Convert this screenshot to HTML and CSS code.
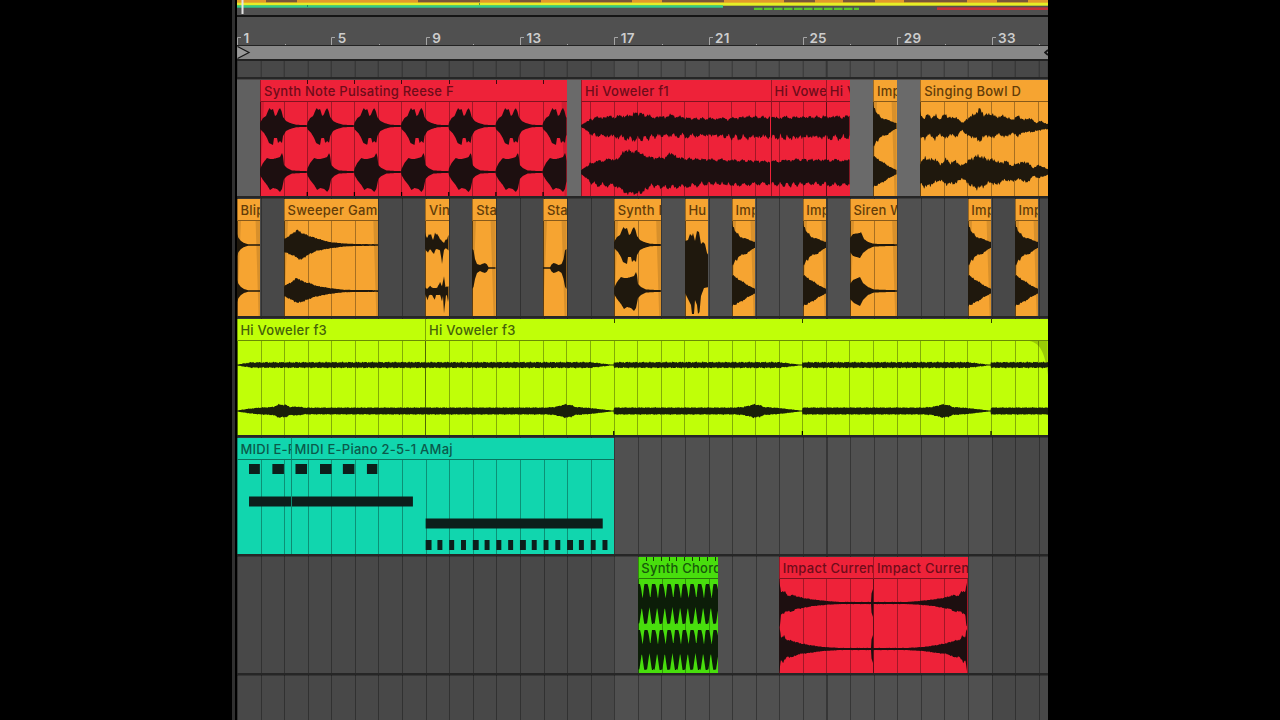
FILE: index.html
```html
<!DOCTYPE html>
<html lang="en">
<head>
<meta charset="UTF-8">
<meta name="viewport" content="width=device-width, initial-scale=1.0">
<title>Arrangement</title>
<link rel="stylesheet" href="styles.css">
</head>
<body>

<div class="arrangement">
  <svg class="overview" id="overview" width="811" height="15" viewBox="0 0 811 15"></svg>

  <div class="ruler" id="ruler"></div>

  <div class="loop-bar">
    <svg width="14" height="13" viewBox="0 0 14 13"><path d="M.5 .5 L12 6.5 L.5 12.5" fill="#999" stroke="#161616" stroke-width="1.2"/></svg>
    <svg width="4" height="13" viewBox="0 0 4 13"><path d="M4 4 L1 6.5 L4 9" fill="none" stroke="#161616" stroke-width="1.8"/></svg>
  </div>

  <div class="scrub lanes"></div>

  <div class="track lanes selected" id="track1"></div>
  <div class="track lanes" id="track2"></div>
  <div class="track lanes" id="track3"></div>
  <div class="track lanes" id="track4"></div>
  <div class="track lanes" id="track5"></div>
  <div class="track lanes"></div>
</div>

<script src="script.js"></script>
</body>
</html>
```

FILE: styles.css
```css
body, html {
  height: 100%;
  margin: 0;
  padding: 0;
  overflow: hidden;
  background: #000;
  font-family: Inter, "Liberation Sans", sans-serif;
}
.arrangement {
  --bar: 23.58px;
  box-sizing: border-box;
  width: 816px;
  height: 720px;
  margin-left: 232px;
  border-left: 3px solid #303030;
  padding-left: 2px;
  overflow: hidden;
  display: flex;
  flex-direction: column;
}
.overview {
  display: block;
  flex: none;
  background: #505050;
}

/* ruler */
.ruler {
  flex: none;
  box-sizing: border-box;
  height: 31px;
  border-top: 2px solid #151515;
  border-bottom: 1px solid #222;
  background: #505050;
  display: flex;
}
.mark {
  flex: none;
  width: calc(var(--bar) * 4);
  box-sizing: border-box;
  padding-top: 20px;
  display: flex;
  align-items: flex-start;
}
.mark svg {
  flex: none;
}
.mark span {
  margin: -7px 0 0 1.5px;
  font-size: 13.5px;
  line-height: 16px;
  font-weight: 600;
  letter-spacing: 0.3px;
  color: #cdcdcd;
  width: 41px;
}
.loop-bar {
  flex: none;
  height: 13px;
  border-bottom: 2px solid #222;
  background: #888;
  display: flex;
  justify-content: space-between;
}

/* bar lines, with every 16 bars shaded in turn */
.lanes {
  background:
    repeating-linear-gradient(to right, rgba(0, 0, 0, 0.32) 0 1px, transparent 1px var(--bar)),
    repeating-linear-gradient(to right, #484848 0 calc(var(--bar) * 16), #505050 calc(var(--bar) * 16) calc(var(--bar) * 32));
  background-position-x: -0.3px;
}
.scrub {
  flex: none;
  height: 16px;
}
.track {
  flex: none;
  box-sizing: border-box;
  height: 119.25px;
  margin-left: -0.3px;
  padding-top: 1px;
  border-top: 2px solid #262626;
  box-shadow: inset 0 1px rgba(0, 0, 0, 0.25);
  background-position-x: 0;
  display: flex;
}
.selected {
  background: repeating-linear-gradient(to right, #606060 0 calc(var(--bar) * 14), #6a6a6a calc(var(--bar) * 14) calc(var(--bar) * 40));
}

/* clips */
.clip {
  flex: none;
  box-sizing: border-box;
  height: 116.25px;
  margin-left: calc(var(--gap) * var(--bar));
  width: calc(var(--length) * var(--bar));
  overflow: hidden;
  background: var(--color);
}
.clip-name {
  box-sizing: border-box;
  height: 22px;
  padding-left: 2.7px;
  border-left: 1px solid rgba(0, 0, 0, 0.35);
  border-bottom: 1px solid rgba(0, 0, 0, 0.45);
  background: repeating-linear-gradient(to right, transparent 0 calc(var(--loop, 9999px) - 1px), rgba(0, 0, 0, 0.75) calc(var(--loop, 9999px) - 1px) var(--loop, 9999px)) 0 0 / 100% 4px no-repeat;
  font-size: 13px;
  line-height: 22px;
  font-weight: 500;
  letter-spacing: 0.26px;
  white-space: nowrap;
  color: var(--ink);
}
.clip-body {
  height: 95px;
  background: repeating-linear-gradient(to right, rgba(0, 0, 0, 0.32) 0 1px, transparent 1px var(--bar));
  background-position-x: calc(var(--start) * var(--bar) * -1 - 1px);
  background-size: calc(var(--bar) * 40) 100%;
  border-left: 1px solid rgba(0, 0, 0, 0.4);
}
.clip-body svg {
  display: block;
  margin-left: -1px;
}
.red { --color: #ee2239; --ink: #6f0c19; --wave: #1d0f10; }
.orange { --color: #f6a431; --ink: #633c08; --wave: #1f180d; }
.lime { --color: #c0ff08; --ink: #44620a; --wave: #19200a; }
.teal { --color: #11d6ae; --ink: #0b5a4b; --wave: #0c1f1b; }
.green { --color: #48de0d; --ink: #17590a; --wave: #0c1d08; }
```

FILE: script.js
```js
const BAR = 23.58;
const NAME_H = 22;

// Envelopes: [x, height] pairs in px, measured from the channel's centre line.
// Each channel is { y, up, down, jag, loop }.
const impact = [
  { y: 46, up: [[0,20],[2,18],[3,14],[6,11],[8,8],[12,7],[15,6],[18,5],[22,3],[24,3]], down: [[0,20],[2,19],[3,16],[5,15],[7,11],[10,10],[14,9],[18,6],[22,3],[24,3]], jag: .1 },
  { y: 92, up: [[0,17],[3,14],[6,12],[8,11],[11,9],[14,7],[19,4],[24,2]], down: [[0,15],[4,13],[8,11],[12,9],[16,6],[20,4],[24,2]], jag: .1 }
];
const pulse = [
  { y: 46, up: [[0,3],[3,8],[6,10],[8,15],[9.5,18],[11,16],[13,17],[15,10],[16.5,11],[18.5,16],[20,18],[21.5,15],[23,9],[26,5],[30,3],[36,1.3],[47.16,.8]],
    down: [[0,3],[4,7],[7,12],[9,17],[13,19],[14,12],[17,12],[18,17],[20,15],[22,17],[23,10],[26,5],[30,3],[36,1.3],[47.16,.8]] },
  { y: 92, up: [[0,3],[3,9],[7,14],[10,13],[13,13],[17,14],[20,15],[22,19],[23,16],[24,7],[27,4],[32,1.5],[47.16,.8]],
    down: [[0,3],[3,8],[7,13],[10,18],[13,16],[17,17],[20,20],[22,17],[24,7],[27,4],[32,1.5],[47.16,.8]] }
];
const voweler = [
  { y: 46, up: [[0,1],[5,4],[15,7],[35,8],[50,9],[55,12],[66,9],[75,7],[90,9],[110,6],[150,6],[167,8],[189,7],[270,8]],
    down: [[0,1],[5,4],[12,8],[35,11],[50,13],[60,12],[75,10],[120,9],[160,11],[270,11]], jag: .2, scallop: 1 },
  { y: 92, up: [[0,2],[8,7],[20,10],[38,12],[44,21],[48,19],[57,19],[65,14],[80,12],[90,17],[100,12],[130,11],[190,9],[215,11],[270,10]],
    down: [[0,2],[8,8],[15,12],[35,14],[45,21],[60,20],[70,13],[85,16],[100,14],[120,12],[270,12]], jag: .12, scallop: 1 }
];
const bowl = [
  { y: 46, up: [[0,13],[4,7],[8,12],[12,8],[16,11],[20,6],[25,13],[28,8],[33,9],[38,7],[43,3],[48,8],[55,12],[60,17],[64,11],[72,12],[76,9],[84,10],[92,6],[98,10],[104,6],[110,8],[116,3],[121,5],[127,2]],
    down: [[0,11],[5,13],[8,8],[15,13],[20,8],[26,13],[30,8],[36,11],[42,4],[48,10],[53,11],[60,15],[66,9],[72,12],[78,8],[86,11],[92,7],[98,10],[104,6],[112,6],[120,4],[127,3]], jag: .2 },
  { y: 92, up: [[0,9],[5,14],[12,12],[16,13],[20,7],[26,13],[30,9],[36,11],[41,6],[48,11],[54,15],[60,16],[66,13],[74,12],[80,9],[86,11],[92,6],[98,9],[107,10],[113,4],[119,7],[127,3]],
    down: [[0,11],[5,15],[12,12],[20,8],[26,12],[36,11],[42,6],[50,13],[56,16],[62,15],[70,10],[76,13],[84,8],[92,9],[100,7],[107,11],[113,4],[119,6],[127,3]], jag: .2 }
];
const blip = [46, 92].map(y => ({ y, up: [[0,11],[1.5,7],[4,4],[7,2],[11,.8],[24,.8]] }));
const sweeper = [
  { y: 46, up: [[0,6],[5,9],[9,12],[13,15],[18,12],[25,9],[35,6],[45,3],[60,1.5],[75,.9],[95,.8]], down: [[0,7],[8,10],[12,12],[17,15],[22,11],[32,6],[45,3.5],[60,1.5],[75,.9],[95,.8]], jag: .1 },
  { y: 92, up: [[0,5],[6,8],[13,13],[20,9],[25,8],[33,5],[45,3],[60,1.2],[95,.8]], down: [[0,5],[6,8],[14,12],[20,10],[30,6],[45,3],[60,1.2],[95,.8]], jag: .1 }
];
const vinyl = [
  { y: 46, up: [[0,12],[2,7],[4,11],[6,10],[8,5],[10,12],[12,11],[15,6],[19,2],[21,6],[22,5],[24,12]], down: [[0,4],[3,8],[5,4],[9,9],[11,4],[15,5],[17,19],[19,5],[21,3],[24,6]], jag: .1 },
  { y: 92, up: [[0,4],[2,2],[5,5],[8,3],[12,3],[15,9],[17,5],[19,14],[20.5,4],[24,5]], down: [[0,3],[2.5,9],[4,4],[7,4],[9.5,9],[11,4],[15,4],[17,10],[18,5],[19,22],[21,4],[22,5],[23,11],[24,4]], jag: .1 }
];
const stab = [{ y: 69, up: [[0,19],[1.5,18],[3,9],[5,4],[8,3],[10,4],[13,5],[15,3.5],[16.5,.8],[24,.8]], down: [[0,21],[1.5,19],[3,11],[5,5],[8,3],[10,4],[13,5],[15,3.5],[16.5,.8],[24,.8]] }];
const hum = [{ y: 69, up: [[0,27],[3,28],[5,34],[7,32],[8,35],[10,27],[12,37],[14,36],[16,24],[18,26],[20,24],[22,15],[24,12]], down: [[0,25],[3,31],[6,37],[7,46],[9,46],[10,32],[12,37],[13,46],[14.5,44],[16,28],[19,20],[24,19]] }];
const siren = [
  { y: 46, up: [[0,7],[3,11],[10,12],[11,13],[14,6],[18,3],[24,1.2],[47,.8]], down: [[0,7],[3,11],[10,13],[13,8],[18,4],[24,1.5],[47,.8]] },
  { y: 92, up: [[0,7],[3,11],[10,14],[13,8],[18,4],[24,1.5],[47,.8]], down: [[0,8],[4,12],[10,15],[13,9],[18,4],[24,1.5],[47,.8]] }
];
const drone = [
  { y: 46, up: [[0,.5],[14,2.6],[189,2.8]], jag: .3 },
  { y: 92, up: [[0,.5],[10,2],[22,3.3],[36,4],[42,6.5],[49,6],[53,4],[60,4.4],[68,3.3],[189,3.4]], jag: .15 }
];
const droneLoop = [
  { y: 46, up: [[0,2.7],[165,2.8],[186,.5],[188.6,.5]], jag: .3, loop: 188.64 },
  { y: 92, up: [[0,3.4],[120,3.4],[130,4],[140,6.5],[146,6],[150,4],[165,3],[186,.6],[188.6,.5]], jag: .15, loop: 188.64 }
];
const chord = [46, 92].map(y => ({ y, up: [[0,19],[2,19],[3.2,14],[4.6,4],[5.5,12],[6.3,19],[7.67,19]], down: [[0,20],[1.3,21],[3.8,4],[5.2,14],[6.2,21],[7.67,21]], loop: 7.67 }));
const currents = [
  { y: 46, up: [[0,20],[1.2,18],[2,11],[4,12],[6,11],[9,7],[13,8],[17,7],[24,5],[34,3.5],[50,1.8],[60,1.1],[94.4,1.1]], down: [[0,25],[1.2,20],[2,12],[4,11],[7,8],[12,9],[17,6],[24,5],[34,3],[50,1.6],[60,1.1],[94.4,1.1]], jag: .12 },
  { y: 92, up: [[0,24],[1.2,18],[2,11],[5,13],[8,9],[14,8],[20,6],[30,4],[44,2],[60,1.1],[94.4,1.1]], down: [[0,23],[1.2,17],[2,11],[4,13],[8,8],[14,8],[20,5],[30,4],[44,2],[60,1.1],[94.4,1.1]], jag: .12 }
];

// MIDI notes: [start bar, length in bars, y]
const notes = [
  [.51, .46, 26], [1.5, .49, 26], [2.48, .49, 26], [3.52, .49, 26], [4.49, .49, 26], [5.51, .44, 26],
  [.51, 6.95, 58.5], [8, 7.51, 80.5]
];
for (let i = 0; i < 16; i++) notes.push([8 + i / 2, i % 4 === 0 ? .25 : .21, 102]);

const tracks = {
  track1: [
    { name: 'Synth Note Pulsating Reese F', start: 1, end: 14, color: 'red', wave: pulse, repeat: 2, loop: 2, fade: 1 },
    { name: 'Hi Voweler f1', start: 14.62, end: 22.65, color: 'red', wave: voweler },
    { name: 'Hi Vowe', start: 22.65, end: 25, color: 'red', wave: voweler, offset: 189 },
    { name: 'Hi V', start: 25, end: 26, color: 'red', wave: voweler, offset: 244 },
    { name: 'Imp', start: 27, end: 28, color: 'orange', wave: impact, fade: 1 },
    { name: 'Singing Bowl D', start: 29, end: 35, color: 'orange', wave: bowl }
  ],
  track2: [
    { name: 'Blip', start: 0, end: 1, color: 'orange', wave: blip, fade: 1 },
    { name: 'Sweeper Gam', start: 2, end: 6, color: 'orange', wave: sweeper, fade: 1 },
    { name: 'Vin', start: 8, end: 9, color: 'orange', wave: vinyl },
    { name: 'Sta', start: 10, end: 11, color: 'orange', wave: stab, fade: 1 },
    { name: 'Sta', start: 13, end: 14, color: 'orange', wave: stab, reverse: 1, fade: 1 },
    { name: 'Synth N', start: 16, end: 18, color: 'orange', wave: pulse, fade: 1 },
    { name: 'Hu', start: 19, end: 20, color: 'orange', wave: hum },
    { name: 'Imp', start: 21, end: 22, color: 'orange', wave: impact, fade: 1 },
    { name: 'Imp', start: 24, end: 25, color: 'orange', wave: impact, fade: 1 },
    { name: 'Siren W', start: 26, end: 28, color: 'orange', wave: siren, fade: 1 },
    { name: 'Imp', start: 31, end: 32, color: 'orange', wave: impact, fade: 1 },
    { name: 'Imp', start: 33, end: 34, color: 'orange', wave: impact, fade: 1 }
  ],
  track3: [
    { name: 'Hi Voweler f3', start: 0, end: 8, color: 'lime', wave: drone },
    { name: 'Hi Voweler f3', start: 8, end: 35, color: 'lime', wave: droneLoop, loop: 8, curve: 1 }
  ],
  track4: [
    { name: 'MIDI E-P', start: 0, end: 2.29, color: 'teal', notes },
    { name: 'MIDI E-Piano 2-5-1 AMaj', start: 2.29, end: 16, color: 'teal', notes }
  ],
  track5: [
    { name: 'Synth Chord', start: 17, end: 20.43, color: 'green', wave: chord, loop: .325 },
    { name: 'Impact Curren', start: 23, end: 27, color: 'red', wave: currents, tail: 15 },
    { name: 'Impact Curren', start: 27, end: 31, color: 'red', wave: currents, reverse: 1 }
  ]
};

function level(points, x) {
  for (let i = 1; i < points.length; i++) {
    const [x0, y0] = points[i - 1];
    const [x1, y1] = points[i];
    if (x <= x1) return y0 + (y1 - y0) * (x - x0) / (x1 - x0);
  }
  return points[points.length - 1][1];
}

// smooth repeatable noise in -1..1
function noise(x, seed) {
  return (Math.sin(x * 1.9 + seed) + Math.sin(x * .83 + seed * 2.1) + Math.sin(x * 3.1 + seed)) / 3;
}

function wavePath(ch, width, clip) {
  const period = ch.loop || (clip.repeat ? clip.repeat * BAR : 0);
  const top = [];
  const bottom = [];
  for (let px = 0; px <= width; px += .5) {
    let x = (clip.reverse ? width - px : px) + (clip.offset || 0);
    if (period) x %= period;
    const jag = ch.jag || 0;
    let up = level(ch.up, x) * (1 + jag * noise(x, ch.y));
    let down = level(ch.down || ch.up, x) * (1 + jag * noise(x, ch.y + 3));
    // uneven rounded lobes along both edges
    if (ch.scallop && x > 8) {
      up += Math.abs(Math.sin(x * .36 + Math.sin(x * .11) + 1)) * 2.2;
      down += Math.abs(Math.sin(x * .4 + Math.sin(x * .09))) * (3.6 + Math.sin(x * .13)) - 2;
    }
    // click at the very end of the clip
    if (clip.tail && px > width - 2) up = down = clip.tail - (width - px) * 3;
    const y = ch.y - NAME_H;
    top.push(px + ' ' + (y - up).toFixed(1));
    bottom.unshift(px + ' ' + (y + down).toFixed(1));
  }
  return `<path fill="var(--wave)" d="M${top.join('L')}L${bottom.join('L')}Z"/>`;
}

function drawClip(clip, gap) {
  const width = (clip.end - clip.start) * BAR;
  let art = '';

  if (clip.fade) {
    art += `<path fill="rgba(0,0,0,.12)" d="M0 0H4L0 95ZM${width} 0H${width - 5}L${width - 2} 95H${width}Z"/>`;
  }
  if (clip.curve) {
    const edge = 811.3 - clip.start * BAR;
    art += `<path fill="rgba(0,0,0,.2)" d="M${edge - 18} 0C${edge - 7} 2 ${edge - 2} 14 ${edge} 34V0Z"/>`;
  }
  if (clip.wave) {
    art += clip.wave.map(ch => wavePath(ch, width, clip)).join('');
  }
  if (clip.notes) {
    art += clip.notes.map(([at, len, y]) =>
      `<rect fill="var(--wave)" x="${(at - clip.start) * BAR}" y="${y - NAME_H}" width="${len * BAR}" height="10"/>`).join('');
    art += '<rect width="1" height="95" fill="#0e8a72"/>';
  }
  // loop points on the bottom edge
  if (clip.loop > 1) {
    for (let x = clip.loop * BAR; x < width; x += clip.loop * BAR) {
      art += `<rect x="${x - .5}" y="90" width="1.2" height="4"/>`;
    }
  }

  const style = `--start:${clip.start};--gap:${gap};--length:${clip.end - clip.start}` +
    (clip.loop ? `;--loop:${clip.loop * BAR}px` : '');
  return `<div class="clip ${clip.color}" style="${style}">
    <div class="clip-name">${clip.name}</div>
    <div class="clip-body"><svg width="${width}" height="95">${art}</svg></div>
  </div>`;
}

for (const id in tracks) {
  let end = 0;
  document.getElementById(id).innerHTML = tracks[id].map(clip => {
    const html = drawClip(clip, clip.start - end);
    end = clip.end;
    return html;
  }).join('');
}

// ruler
let marks = '';
for (let bar = 1; bar <= 33; bar += 4) {
  marks += `<div class="mark">
    <svg width="5" height="8"><path d="M.5 8V.5H4" fill="none" stroke="#a5a5a5"/></svg>
    <span>${bar}</span><svg width="2" height="8"><rect y="7" width="1" height="1" fill="#aaa"/></svg>
  </div>`;
}
document.getElementById('ruler').innerHTML = marks;

// overview strip
const gaps = [[29, 60], [181, 243], [273, 304], [333, 395], [425, 487], [547, 578], [606, 638], [667, 730], [760, 791]];
let strip = '<rect width="811" height="3" fill="#e29a2a"/>';
strip += gaps.map(([a, b]) => `<rect x="${a}" width="${b - a}" height="2.4" fill="#795638"/>`).join('');
strip += '<rect y="2.7" width="811" height="3" fill="#e6ee26"/>';
strip += '<rect y="5.3" width="486" height="2.4" fill="#32cc88"/>';
strip += '<rect x="70" y="5" width="1" height="2" fill="#286"/><rect x="242" y="3" width="1" height="2" fill="#693"/>';
for (let i = 0; i < 11; i++) {
  strip += `<rect x="${517 + i * 10}" y="7.7" width="${i === 10 ? 5 : 8.5}" height="2.3" fill="#58c42c"/>`;
}
strip += '<rect x="700" y="7.3" width="111" height="2.7" fill="#c23338"/>';
strip += '<rect x="4.5" width="2" height="14" fill="#e4e4e4"/>';
document.getElementById('overview').innerHTML = strip;
```
